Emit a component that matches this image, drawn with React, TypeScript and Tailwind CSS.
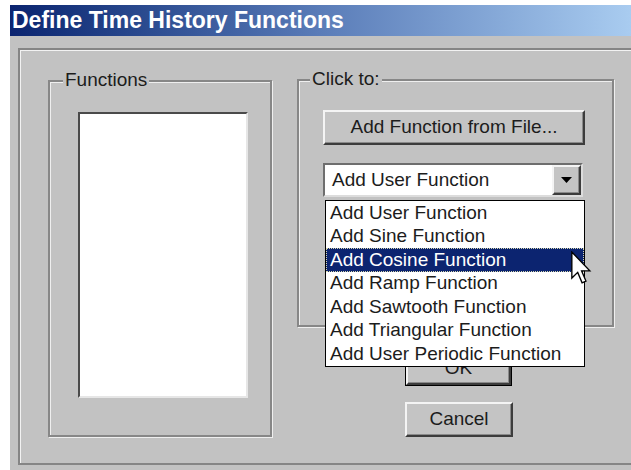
import React from 'react';

const listItems = [
  'Add User Function',
  'Add Sine Function',
  'Add Cosine Function',
  'Add Ramp Function',
  'Add Sawtooth Function',
  'Add Triangular Function',
  'Add User Periodic Function',
];

const raised =
  'border-2 border-t-[#f4f4f4] border-l-[#f4f4f4] border-b-[#3c3c3c] border-r-[#3c3c3c] shadow-[inset_-1px_-1px_0_#8a8a8a]';

function GroupBox({ label, labelLeft, className, children }: { label: string; labelLeft: string; className: string; children: React.ReactNode }) {
  return (
    <div
      className={`relative border-2 border-[#878787] shadow-[inset_1px_1px_0_#efefef,1px_1px_0_#efefef] ${className}`}
    >
      <span className={`absolute -top-[13px] bg-[#c2c2c2] px-[2px] text-[19px] leading-[22px] text-[#1c1c1c] ${labelLeft}`}>
        {label}
      </span>
      {children}
    </div>
  );
}

// classic arrow pointer, drawn above the open list
function Cursor() {
  return (
    <svg className="absolute left-[571px] top-[251px] z-30" width="21" height="34" viewBox="0 0 12.5 20">
      <path
        d="M0.5 0.5 L0.5 16 L4 12.6 L6.6 18.8 L8.9 17.8 L6.3 11.7 L11.2 11.7 Z"
        fill="#fff"
        stroke="#000"
        strokeWidth="0.8"
        strokeLinejoin="miter"
      />
    </svg>
  );
}

export default function App() {
  return (
    <div className="relative h-[470px] w-[631px] overflow-hidden bg-white font-['Liberation_Sans',Arial,sans-serif]">
      <div className="h-[5px]" />
      <div className="ml-[10px] flex h-[465px] flex-col">
        {/* Title bar */}
        <div className="flex h-[31px] items-center bg-gradient-to-r from-[#0b2470] via-[#5a7cb8] to-[#a9ccf0] pl-[2px]">
          <span className="text-[23px] font-bold leading-none text-white">Define Time History Functions</span>
        </div>

        {/* Dialog body */}
        <div className="flex-1 overflow-hidden bg-[#c2c2c2] pl-[8px] pt-[12px]">
          <div className="flex h-[417px] w-[640px] items-start gap-[25px] border-2 border-[#858585] pl-[28px] pt-[30px] shadow-[inset_1px_1px_0_#f2f2f2]">
            <GroupBox label="Functions" labelLeft="left-[13px]" className="h-[357px] w-[224px] pl-[28px] pt-[30px]">
              <div className="h-[286px] w-[170px] border-2 border-t-[#4a4a4a] border-l-[#4a4a4a] border-b-[#e6e6e6] border-r-[#e6e6e6] bg-white" />
            </GroupBox>

            <div className="-mt-[1px] flex flex-col">
              <GroupBox label="Click to:" labelLeft="left-[11px]" className="h-[248px] w-[317px] pl-[24px] pt-[29px]">
                <button
                  className={`flex h-[35px] w-[262px] items-center justify-center bg-[#c4c4c4] text-[19px] text-[#1c1c1c] ${raised}`}
                >
                  Add Function from File...
                </button>

                {/* Combo box with its list dropped open */}
                <div className="relative mt-[18px] flex h-[34px] w-[260px] items-center border-2 border-t-[#6e6e6e] border-l-[#6e6e6e] border-b-[#dcdcdc] border-r-[#dcdcdc] bg-white">
                  <span className="flex-1 pl-[7px] text-[19px] text-[#1c1c1c]">Add User Function</span>
                  <div className={`flex h-full w-[29px] items-center justify-center bg-[#c4c4c4] ${raised}`}>
                    <svg width="11" height="6" viewBox="0 0 11 6">
                      <path d="M0 0 H11 L5.5 6 Z" fill="#000" />
                    </svg>
                  </div>

                  <div className="absolute left-0 top-[35px] z-10 w-[260px] border border-black bg-white">
                    {listItems.map((item) =>
                      item === 'Add Cosine Function' ? (
                        <div
                          key={item}
                          className="flex h-[23.5px] items-center border border-dotted border-[#d8d8b0] bg-[#0c2470] pl-[3px] text-[19px] text-white"
                        >
                          {item}
                        </div>
                      ) : (
                        <div key={item} className="flex h-[23.5px] items-center pl-[4px] text-[19px] text-[#1c1c1c]">
                          {item}
                        </div>
                      )
                    )}
                  </div>
                </div>
              </GroupBox>

              {/* default button, its top half under the open list */}
              <div className="ml-[108px] mt-[23px] h-[36px] w-[107px] border border-black bg-[#c4c4c4]">
                <div className={`flex h-full w-full items-center justify-center text-[19px] text-[#1c1c1c] ${raised}`}>
                  OK
                </div>
              </div>
              <button
                className={`ml-[108px] mt-[16px] flex h-[35px] w-[108px] items-center justify-center bg-[#c4c4c4] text-[19px] text-[#1c1c1c] ${raised}`}
              >
                Cancel
              </button>
            </div>
          </div>
        </div>
      </div>
      <Cursor />
    </div>
  );
}
